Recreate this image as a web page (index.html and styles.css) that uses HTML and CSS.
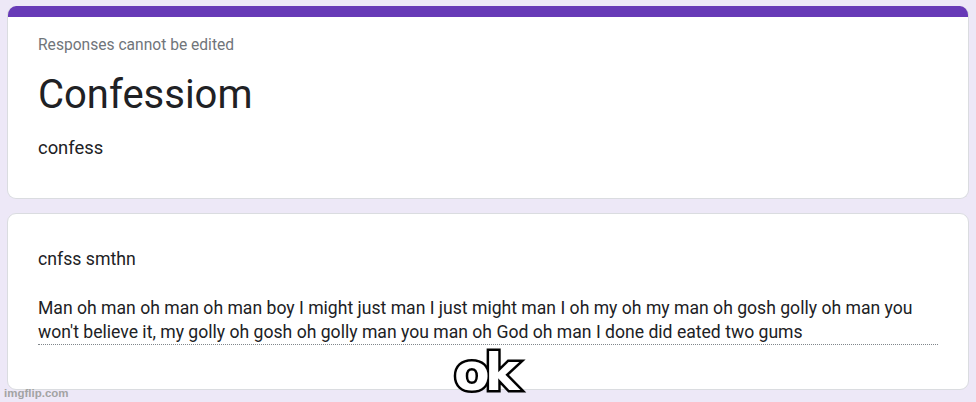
FILE: index.html
```html
<!DOCTYPE html>
<html lang="en">
<head>
  <meta charset="UTF-8" />
  <title>Confessiom</title>
  <link rel="stylesheet" href="styles.css">
</head>
<body>
  <div class="form">
    <div class="card header-card">
      <div class="accent"></div>
      <div class="card-body">
        <div class="notice">Responses cannot be edited</div>
        <h1>Confessiom</h1>
        <div class="desc">confess</div>
      </div>
    </div>
    <div class="card">
      <div class="card-body question">
        <div class="q-title">cnfss smthn</div>
        <div class="answer">Man oh man oh man oh man boy I might just man I just might man I oh my oh my man oh gosh golly oh man you won't believe it, my golly oh gosh oh golly man you man oh God oh man I done did eated two gums</div>
      </div>
    </div>
  </div>
  <div class="caption">ok</div>
  <div class="watermark">imgflip.com</div>
</body>
</html>
```

FILE: styles.css
```css
body {
  margin: 0;
  background: #ede8f7;
  font-family: Roboto, "Noto Sans", sans-serif;
  color: #202124;
  height: 402px;
  overflow: hidden;
  position: relative;
}
.form {
  display: flex;
  flex-direction: column;
  gap: 14px;
  padding: 6px 7px 0 7px;
}
.card {
  background: white;
  border: 1px solid #dadce0;
  border-radius: 9px;
  overflow: hidden;
}
.header-card {
  border-top: none;
}
.accent {
  height: 11px;
  background: #673ab7;
}
.card-body {
  padding: 19px 30px 37px 30px;
}
.notice {
  font-size: 15.6px;
  color: #70757a;
}
h1 {
  font-size: 40px;
  font-weight: 400;
  margin: 15px 0 14px 0;
  line-height: 52px;
}
.desc {
  font-size: 18.4px;
  line-height: 26px;
}
.question {
  padding: 32px 30px 44px 30px;
}
.q-title {
  font-size: 17.7px;
  line-height: 26px;
  margin-bottom: 24px;
}
.answer {
  font-size: 17.6px;
  line-height: 24px;
  color: #202124;
  padding-bottom: 0;
  border-bottom: 1px dotted #80868b;
}
.caption {
  position: absolute;
  left: 454px;
  top: 346px;
  font-family: "DejaVu Sans", sans-serif;
  font-weight: bold;
  font-size: 52px;
  letter-spacing: -5px;
  color: white;
  -webkit-text-stroke: 5px black;
  paint-order: stroke fill;
  text-shadow: 0 0 3px rgba(0, 0, 0, 0.7);
  line-height: 52px;
}
.watermark {
  position: absolute;
  left: 4px;
  bottom: 3px;
  font-family: "Liberation Sans", sans-serif;
  font-size: 11.5px;
  font-weight: bold;
  color: #a3a3a3;
}
```
